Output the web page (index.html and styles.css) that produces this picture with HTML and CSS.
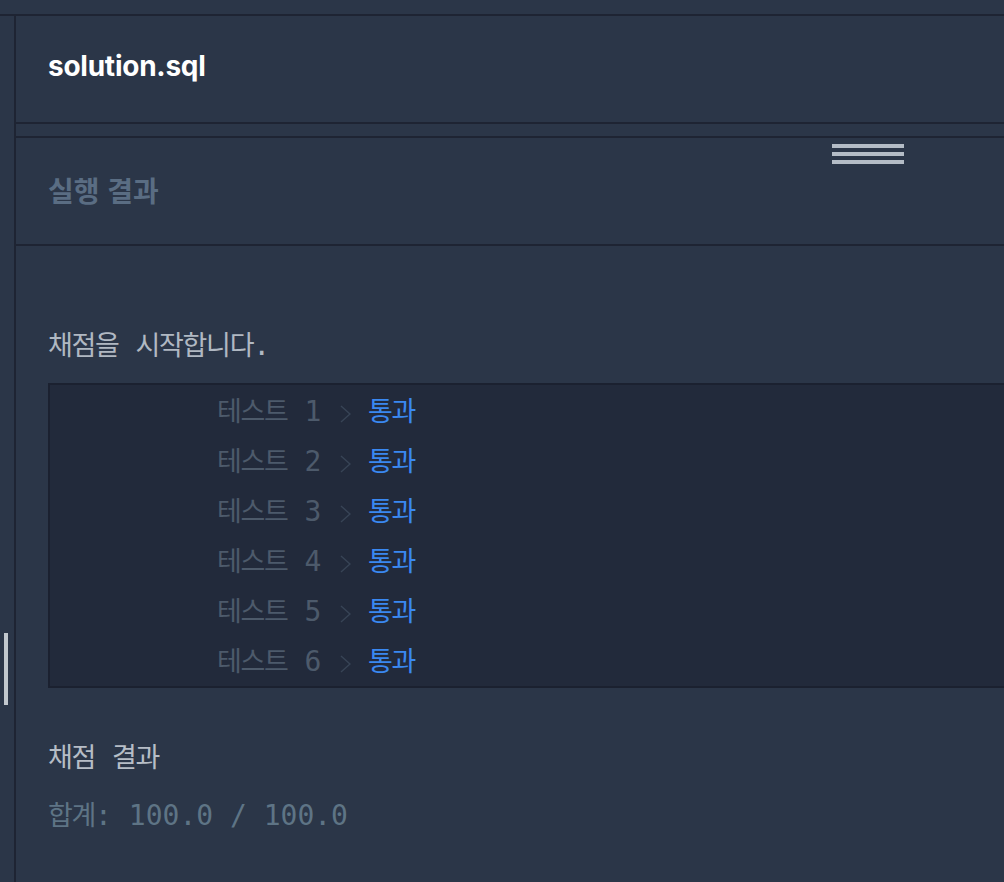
FILE: index.html
```html
<!DOCTYPE html>
<html lang="ko">
<head>
<meta charset="utf-8">
<title>solution.sql</title>
<link rel="stylesheet" href="styles.css">
</head>
<body>
<div class="topbar"></div>
<div class="main">
  <aside class="gutter"><span class="grip"></span></aside>
  <section class="panel">
    <header class="file-head"><h1 class="file-name">solution.sql</h1></header>
    <div class="spacer"></div>
    <div class="result-head">
      <h2 class="result-title">실행 결과</h2>
      <span class="handle"></span>
    </div>
    <div class="output">
      <p class="line start"><span class="ko">채점을</span> <span class="ko">시작합니다</span>.</p>
      <div class="tests">
        <div class="row"><span class="ko">테스트</span> 1 <svg class="chev" viewBox="0 0 13 22" width="13" height="22"><polyline points="3,3 12,11 3,19"/></svg> <span class="ko pass">통과</span></div>
        <div class="row"><span class="ko">테스트</span> 2 <svg class="chev" viewBox="0 0 13 22" width="13" height="22"><polyline points="3,3 12,11 3,19"/></svg> <span class="ko pass">통과</span></div>
        <div class="row"><span class="ko">테스트</span> 3 <svg class="chev" viewBox="0 0 13 22" width="13" height="22"><polyline points="3,3 12,11 3,19"/></svg> <span class="ko pass">통과</span></div>
        <div class="row"><span class="ko">테스트</span> 4 <svg class="chev" viewBox="0 0 13 22" width="13" height="22"><polyline points="3,3 12,11 3,19"/></svg> <span class="ko pass">통과</span></div>
        <div class="row"><span class="ko">테스트</span> 5 <svg class="chev" viewBox="0 0 13 22" width="13" height="22"><polyline points="3,3 12,11 3,19"/></svg> <span class="ko pass">통과</span></div>
        <div class="row"><span class="ko">테스트</span> 6 <svg class="chev" viewBox="0 0 13 22" width="13" height="22"><polyline points="3,3 12,11 3,19"/></svg> <span class="ko pass">통과</span></div>
      </div>
      <p class="line summary-title"><span class="ko">채점</span> <span class="ko">결과</span></p>
      <p class="line total"><span class="ko">합계</span>: 100.0 / 100.0</p>
    </div>
  </section>
</div>
</body>
</html>
```
FILE: styles.css
```css
html, body {
  margin: 0;
  padding: 0;
}
body {
  width: 1004px;
  height: 882px;
  overflow: hidden;
  background: #2b3648;
  font-family: "Noto Sans CJK KR", sans-serif;
}
.topbar {
  height: 14px;
  border-bottom: 2px solid #1e2433;
}
.main {
  display: flex;
  height: 866px;
}
.gutter {
  width: 14px;
  flex: none;
  border-right: 2px solid #1e2433;
  position: relative;
}
.grip {
  position: absolute;
  left: 4px;
  top: 617px;
  width: 4px;
  height: 72px;
  background: #c2c8ce;
}
.panel {
  flex: 1;
  display: flex;
  flex-direction: column;
  min-width: 0;
}
.file-head {
  flex: none;
  height: 106px;
  border-bottom: 2px solid #1e2433;
  display: flex;
  align-items: center;
  padding-left: 32px;
}
.file-name {
  margin: 0;
  font-family: Inter, "Liberation Sans", sans-serif;
  font-weight: 700;
  font-size: 28px;
  letter-spacing: -0.25px;
  color: #ffffff;
  line-height: 1;
  padding-bottom: 6px;
}
.spacer {
  flex: none;
  height: 12px;
  border-bottom: 2px solid #1e2433;
}
.result-head {
  flex: none;
  height: 106px;
  border-bottom: 2px solid #1e2433;
  display: flex;
  align-items: center;
  padding-left: 32px;
  position: relative;
}
.result-title {
  margin: 0;
  font-size: 28px;
  font-weight: 700;
  color: #5a6d83;
  line-height: 1;
  padding-bottom: 2px;
}
.handle {
  position: absolute;
  left: 816px;
  top: 6px;
  width: 72px;
  height: 20px;
  background: repeating-linear-gradient(to bottom, #b4bcc6 0 4px, transparent 4px 8px);
}
.output {
  flex: none;
  padding: 78px 0 0 32px;
  font-family: "DejaVu Sans Mono", "Liberation Mono", "Noto Sans CJK KR", monospace;
  font-size: 28px;
}
.ko {
  font-family: "Noto Sans CJK KR", sans-serif;
  font-size: 27px;
  letter-spacing: -1.3px;
}
.line {
  margin: 0;
  line-height: 40px;
  height: 40px;
  white-space: pre;
}
.start {
  color: #b0b8c2;
}
.tests {
  margin-top: 19px;
  background: #222a3b;
  border: 2px solid #1b2130;
  border-right: none;
  padding-bottom: 1px;
}
.row {
  height: 50px;
  line-height: 50px;
  padding-left: 167px;
  white-space: pre;
  color: #4d5a6b;
}
.chev {
  display: inline-block;
  vertical-align: -4px;
  fill: none;
  stroke: #384456;
  stroke-width: 1.4;
}
.pass {
  color: #3a88f0;
}
.summary-title {
  margin-top: 48px;
  color: #b6bdc6;
}
.total {
  margin-top: 18px;
  color: #5e7485;
}
```
